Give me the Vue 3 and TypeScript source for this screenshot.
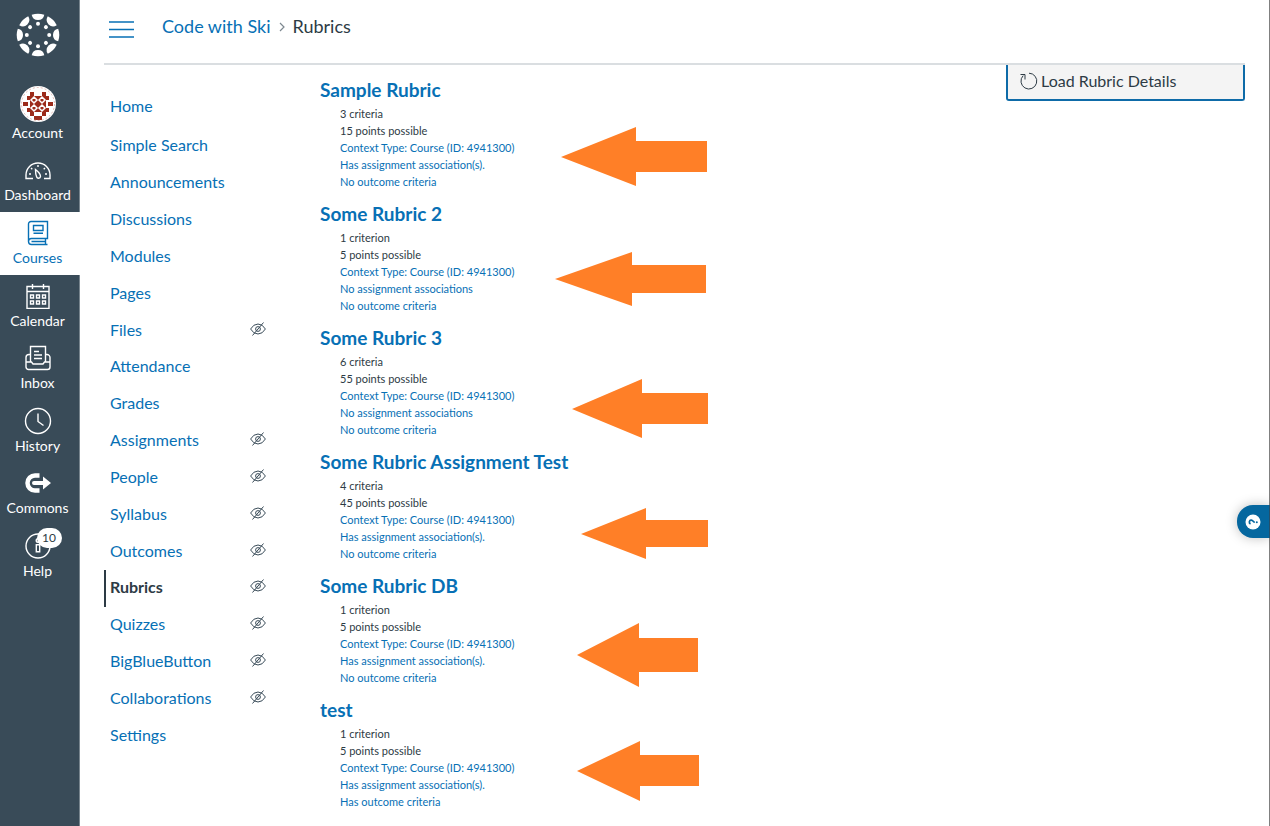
<script setup lang="ts">
interface CourseLink { label: string; hidden?: boolean; active?: boolean }
interface Arrow { tip: number; neck: number; tail: number; top: number; shaftTop: number; mid: number; shaftBottom: number; bottom: number }
interface Rubric { title: string; plain: string[]; links: string[]; arrow: Arrow }

const globalLinks = ['Account', 'Dashboard', 'Courses', 'Calendar', 'Inbox', 'History', 'Commons', 'Help']

const courseLinks: CourseLink[] = [
  { label: 'Home' },
  { label: 'Simple Search' },
  { label: 'Announcements' },
  { label: 'Discussions' },
  { label: 'Modules' },
  { label: 'Pages' },
  { label: 'Files', hidden: true },
  { label: 'Attendance' },
  { label: 'Grades' },
  { label: 'Assignments', hidden: true },
  { label: 'People', hidden: true },
  { label: 'Syllabus', hidden: true },
  { label: 'Outcomes', hidden: true },
  { label: 'Rubrics', hidden: true, active: true },
  { label: 'Quizzes', hidden: true },
  { label: 'BigBlueButton', hidden: true },
  { label: 'Collaborations', hidden: true },
  { label: 'Settings' },
]

const context = 'Context Type: Course (ID: 4941300)'
const hasAssignments = 'Has assignment association(s).'
const noAssignments = 'No assignment associations'
const noOutcomes = 'No outcome criteria'

// Arrow coordinates are relative to the top left corner of the rubric's block.
const rubrics: Rubric[] = [
  { title: 'Sample Rubric', plain: ['3 criteria', '15 points possible'], links: [context, hasAssignments, noOutcomes],
    arrow: { tip: 241, neck: 316, tail: 387, top: 48, shaftTop: 62, mid: 78, shaftBottom: 93, bottom: 107 } },
  { title: 'Some Rubric 2', plain: ['1 criterion', '5 points possible'], links: [context, noAssignments, noOutcomes],
    arrow: { tip: 235, neck: 312, tail: 386, top: 49, shaftTop: 62, mid: 76, shaftBottom: 90, bottom: 103 } },
  { title: 'Some Rubric 3', plain: ['6 criteria', '55 points possible'], links: [context, noAssignments, noOutcomes],
    arrow: { tip: 252, neck: 322, tail: 388, top: 52, shaftTop: 66, mid: 82, shaftBottom: 97, bottom: 111 } },
  { title: 'Some Rubric Assignment Test', plain: ['4 criteria', '45 points possible'], links: [context, hasAssignments, noOutcomes],
    arrow: { tip: 261, neck: 326, tail: 388, top: 57, shaftTop: 69, mid: 83, shaftBottom: 96, bottom: 108 } },
  { title: 'Some Rubric DB', plain: ['1 criterion', '5 points possible'], links: [context, hasAssignments, noOutcomes],
    arrow: { tip: 257, neck: 319, tail: 378, top: 48, shaftTop: 63, mid: 80, shaftBottom: 97, bottom: 112 } },
  { title: 'test', plain: ['1 criterion', '5 points possible'], links: [context, hasAssignments, 'Has outcome criteria'],
    arrow: { tip: 257, neck: 320, tail: 379, top: 42, shaftTop: 56, mid: 72, shaftBottom: 87, bottom: 102 } },
]

function arrowPoints(a: Arrow): string {
  return [
    [a.tip, a.mid], [a.neck, a.top], [a.neck, a.shaftTop], [a.tail, a.shaftTop],
    [a.tail, a.shaftBottom], [a.neck, a.shaftBottom], [a.neck, a.bottom],
  ].map((p) => p.join(',')).join(' ')
}

const spokes = [0, 45, 90, 135, 180, 225, 270, 315]
</script>

<template>
  <div class="page">
    <nav class="global" aria-label="Global navigation">
      <a class="logo" href="#" aria-label="Canvas">
        <svg width="44" height="44" viewBox="-22 -22 44 44" fill="#fff">
          <g v-for="s in spokes" :key="s" :transform="`rotate(${s})`">
            <path d="M-6.3 -20.2Q0 -22.4 6.3 -20.2Q5.400 -15 0 -15Q-5.400 -15 -6.3 -20.2Z" />
            <circle cx="0" cy="-11.2" r="2" />
          </g>
        </svg>
      </a>
      <ul class="global-list">
        <li v-for="name in globalLinks" :key="name">
          <a href="#" :class="['global-link', { current: name === 'Courses' }]">
            <span class="icon">
              <svg v-if="name === 'Account'" class="avatar" width="36" height="36" viewBox="0 0 36 36">
                <defs><clipPath id="avatar"><circle cx="18" cy="18" r="18" /></clipPath></defs>
                <circle cx="18" cy="18" r="18" fill="#fff" />
                <g clip-path="url(#avatar)">
                  <path fill="#9c2b1b" d="M10 6h4v4h8V6h4v4h3v4h-3v8h3v4h-3v4h-4v-4h-8v4h-4v-4H7v-4h3v-8H7v-4h3zM3 16h5v4H3zM28 16h5v4h-5zM14 30h8v4h-8z" />
                  <path fill="#9c2b1b" stroke="#fff" stroke-width="1.500" d="M14 11l3 3-3 3-3-3zM22 11l3 3-3 3-3-3zM14 19l3 3-3 3-3-3zM22 19l3 3-3 3-3-3z" />
                  <circle cx="18" cy="18" r="16.500" fill="none" stroke="#d9a9a2" stroke-width="0.800" stroke-dasharray="2 2" />
                </g>
              </svg>
              <svg v-else-if="name === 'Dashboard'" width="26" height="26" viewBox="0 0 26 26" fill="none" stroke="#fff" stroke-width="1.4">
                <path d="M8 21.500H1V18a12 12 0 0 1 24 0v3.500h-6" />
                <path d="M10.500 12.500c2 1.500 5 4.500 5 7a2 2 0 0 1-3.900.3C11 18.500 10.500 15 10.500 12.500z" />
                <path d="M13 8v2M6 11l1.300 1.200M20 11l-1.300 1.200M4 17h2M20 17h2" />
              </svg>
              <svg v-else-if="name === 'Courses'" width="26" height="26" viewBox="0 0 26 26" fill="none" stroke="#0770b5" stroke-width="1.4">
                <path d="M22.500 24.500H6.500a3 3 0 0 1-3-3V4A2.500 2.500 0 0 1 6 1.500h16.500V18.500H6.500a3 3 0 0 0 0 6M20.500 18.500v6M6.500 21.500h14M8.500 5.500h9.500v5H8.500zM8.500 13.300H18" />
              </svg>
              <svg v-else-if="name === 'Calendar'" width="26" height="26" viewBox="0 0 26 26" fill="none" stroke="#fff" stroke-width="1.4">
                <path d="M2 3.500h22v22H2zM2 8.500h22M7.500 1v5M18.500 1v5" />
                <path d="M5.500 12h3v3h-3zM11.500 12h3v3h-3zM17.500 12h3v3h-3zM5.500 18h3v3h-3zM11.500 18h3v3h-3zM17.500 18h3v3h-3z" />
              </svg>
              <svg v-else-if="name === 'Inbox'" width="26" height="26" viewBox="0 0 26 26" fill="none" stroke="#fff" stroke-width="1.4">
                <path d="M5.500 17V1.500h15V17M9 6.500h5M9 10h8M9 13.500h8" />
                <path d="M5.500 9.500H4a3 3 0 0 0-3 3V22a2.500 2.500 0 0 0 2.500 2.500h19A2.500 2.500 0 0 0 25 22v-9.500a3 3 0 0 0-3-3h-1.500M1.500 17h5l1.500 2h10l1.500-2h5" />
              </svg>
              <svg v-else-if="name === 'History'" width="28" height="28" viewBox="0 0 28 28" fill="none" stroke="#fff" stroke-width="1.400">
                <circle cx="14" cy="14" r="12.500" /><path d="M14 6.500v8l5.500 4" />
              </svg>
              <svg v-else-if="name === 'Commons'" width="26" height="22" viewBox="0 0 26 22">
                <path d="M14.500 3.500H10a7.500 7.500 0 0 0 0 15h4.500" fill="none" stroke="#fff" stroke-width="4.500" />
                <path d="M9 9h9V4.500L26 11l-8 6.500V13H9a2 2 0 0 1 0-4z" fill="#fff" stroke="#394b58" stroke-width="1" paint-order="stroke" />
              </svg>
              <svg v-else width="26" height="26" viewBox="0 0 26 26" fill="none" stroke="#fff" stroke-width="1.4">
                <circle cx="13" cy="13" r="12" /><circle cx="13" cy="7.500" r="1.800" /><path d="M11.300 11.800h3.400v7h-3.400z" />
              </svg>
              <span v-if="name === 'Help'" class="badge">10</span>
            </span>
            <span class="label">{{ name }}</span>
          </a>
        </li>
      </ul>
    </nav>

    <div class="main">
      <header class="top">
        <button class="menu" type="button" aria-label="Toggle course navigation">
          <svg width="25" height="17" viewBox="0 0 25 17" stroke="#0770b5" stroke-width="1.500"><path d="M0 1h25M0 8.500h25M0 16h25" /></svg>
        </button>
        <nav class="crumbs" aria-label="Breadcrumb">
          <a href="#">Code with Ski</a>
          <svg width="6" height="10" viewBox="0 0 6 10" fill="none" stroke="#7d8890" stroke-width="1.200"><path d="M1 1l4 4-4 4" /></svg>
          <span>Rubrics</span>
        </nav>
      </header>

      <div class="columns">
        <nav class="course" aria-label="Course navigation">
          <ul>
            <li v-for="l in courseLinks" :key="l.label">
              <a href="#" :class="{ active: l.active }">
                <span>{{ l.label }}</span>
                <svg v-if="l.hidden" width="16" height="14" viewBox="0 0 16 14" fill="none" stroke="#394b58" stroke-width="1">
                  <path d="M.6 7Q3.500 2 8 2t7.400 5Q12.500 12 8 12T.6 7zM2.500 13.500L13.500.5" /><circle cx="8" cy="7" r="2.400" />
                </svg>
              </a>
            </li>
          </ul>
        </nav>

        <main class="rubrics">
          <section v-for="r in rubrics" :key="r.title" class="rubric">
            <h2><a href="#">{{ r.title }}</a></h2>
            <ul>
              <li v-for="p in r.plain" :key="p">{{ p }}</li>
              <li v-for="t in r.links" :key="t"><a href="#">{{ t }}</a></li>
            </ul>
            <svg class="arrow" width="400" height="124" aria-hidden="true">
              <polygon :points="arrowPoints(r.arrow)" fill="#ff7f27" />
            </svg>
          </section>
        </main>

        <aside>
          <button class="load" type="button">
            <svg width="18" height="18" viewBox="0 0 18 18" fill="none" stroke="#2d3b45" stroke-width="1"><path d="M9 1.200A7.900 7.900 0 1 1 3.200 3.600M0.500 2.500H5v5" /></svg>
            Load Rubric Details
          </button>
        </aside>
      </div>
    </div>

    <button class="widget" type="button" aria-label="Help">
      <svg width="16" height="16" viewBox="0 0 16 16">
        <circle cx="8" cy="8" r="7.500" fill="#fff" />
        <path d="M5.500 10C3.500 9 4.200 6 6.300 6.200S8 8.200 9.800 8.200" fill="none" stroke="#05679f" stroke-width="1.700" />
        <circle cx="11.800" cy="8.200" r="1" fill="#05679f" />
      </svg>
    </button>
  </div>
</template>

<style>
body { margin: 0; background: #fff; }
</style>

<style scoped>
.page {
  display: flex;
  min-height: 100vh;
  box-sizing: border-box;
  border-right: 1px solid #808080;
  font-family: Lato, "Liberation Sans", sans-serif;
  font-size: 16px;
  color: #2d3b45;
}
a { color: #0770b5; text-decoration: none; }
ul { list-style: none; margin: 0; padding: 0; }
button { font: inherit; color: inherit; cursor: pointer; }
svg { display: block; flex: none; }

.global { width: 80px; flex: none; background: linear-gradient(to left, #78858e 1px, #394b58 1px); }
.logo { display: flex; justify-content: center; padding: 13px 5px 30px 0; }
.global-list { display: grid; grid-auto-rows: 1fr; height: 501px; }
.global-link {
  display: flex;
  flex-direction: column;
  align-items: center;
  justify-content: flex-end;
  box-sizing: border-box;
  height: 100%;
  padding: 0 5px 8px 0;
  color: #fff;
  font-size: 14px;
  line-height: 18px;
}
.global-link.current { background: #fff; color: #0770b5; }
.icon { position: relative; display: flex; align-items: center; justify-content: center; height: 32px; }
.avatar { margin-bottom: 8px; }
.badge {
  position: absolute;
  top: -2px;
  left: 12px;
  width: 25px;
  border-radius: 10px;
  background: #fff;
  color: #2d3b45;
  font-size: 12px;
  line-height: 20px;
  text-align: center;
}

.main { flex: 1; min-width: 0; padding: 0 24px; }
.top { display: flex; box-sizing: border-box; height: 65px; padding: 16px 5px 0; border-bottom: 2px solid #dadee1; }
.menu { width: 25px; height: 27px; margin-right: 28px; padding: 0; border: 0; background: none; }
.crumbs { display: flex; align-items: center; gap: 8px; height: 21px; font-size: 18px; line-height: 21px; }

.columns { display: flex; align-items: flex-start; }
.course { width: 164px; flex: none; padding-top: 22px; margin-right: 52px; }
.course ul { display: grid; grid-template-rows: 39px 39px repeat(16, 1fr); height: 667px; }
.course a {
  display: flex;
  align-items: center;
  justify-content: space-between;
  box-sizing: border-box;
  height: 100%;
  padding: 0 2px 3px 4px;
  border-left: 2px solid transparent;
}
.course a svg { margin-bottom: 1px; }
.course a.active { border-color: #2d3b45; color: #2d3b45; font-weight: 700; }

.rubrics { flex: 1; min-width: 0; padding-top: 14px; }
.rubric { position: relative; height: 124px; }
.rubric h2 { margin: 0 0 4px; font-size: 19px; line-height: 22px; }
.rubric ul { padding-left: 20px; font-size: 11px; line-height: 17px; }
.arrow { position: absolute; top: 0; left: 0; pointer-events: none; }

.load {
  display: flex;
  align-items: center;
  gap: 3px;
  box-sizing: border-box;
  width: 239px;
  height: 36px;
  padding: 0 12px 4px;
  border: 2px solid #0e6ba8;
  border-top: 0;
  border-radius: 0 0 3px 3px;
  background: #f4f4f4;
}
.load svg { margin-top: 2px; }

.widget {
  position: fixed;
  top: 505px;
  right: 0;
  width: 33px;
  height: 33px;
  padding: 0 0 0 8px;
  border: 0;
  border-right: 1px solid #24506c;
  border-radius: 16px 0 0 16px;
  background: #05679f;
  box-shadow: 0 0 12px rgba(0, 0, 0, 0.25);
}
</style>
